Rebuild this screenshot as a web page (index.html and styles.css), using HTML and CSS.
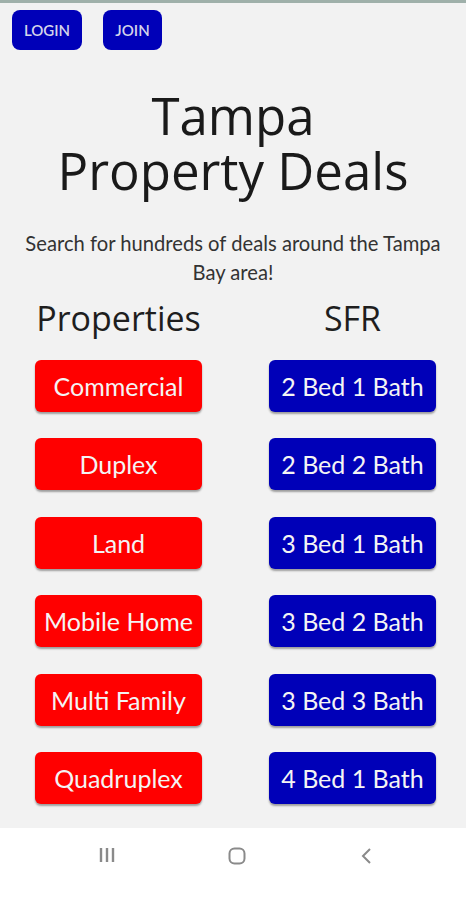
FILE: index.html
```html
<!DOCTYPE html>
<html lang="en">
<head>
  <meta charset="UTF-8">
  <meta name="viewport" content="width=device-width, initial-scale=1.0">
  <title>Tampa Property Deals</title>
  <link rel="stylesheet" href="styles.css">
</head>
<body>
  <div class="app">
    <div class="top-bar">
      <button class="auth-btn login">LOGIN</button>
      <button class="auth-btn join">JOIN</button>
    </div>

    <h1 class="title">Tampa<br>Property Deals</h1>
    <p class="subtitle">Search for hundreds of deals around the Tampa Bay area!</p>

    <div class="columns">
      <div class="column">
        <h2>Properties</h2>
        <button class="deal-btn red">Commercial</button>
        <button class="deal-btn red">Duplex</button>
        <button class="deal-btn red">Land</button>
        <button class="deal-btn red">Mobile Home</button>
        <button class="deal-btn red">Multi Family</button>
        <button class="deal-btn red">Quadruplex</button>
      </div>
      <div class="column">
        <h2>SFR</h2>
        <button class="deal-btn blue">2 Bed 1 Bath</button>
        <button class="deal-btn blue">2 Bed 2 Bath</button>
        <button class="deal-btn blue">3 Bed 1 Bath</button>
        <button class="deal-btn blue">3 Bed 2 Bath</button>
        <button class="deal-btn blue">3 Bed 3 Bath</button>
        <button class="deal-btn blue">4 Bed 1 Bath</button>
      </div>
    </div>
  </div>

  <!-- Android nav bar -->
  <div class="nav-bar">
    <svg width="20" height="18" viewBox="0 0 20 18"><path d="M4 2v14M10 2v14M16 2v14" stroke="#8a8a8a" stroke-width="2.4" fill="none"/></svg>
    <svg width="20" height="20" viewBox="0 0 20 20"><rect x="2.5" y="2.5" width="15" height="15" rx="5" stroke="#8a8a8a" stroke-width="2" fill="none"/></svg>
    <svg width="20" height="20" viewBox="0 0 20 20"><path d="M13 3L6 10l7 7" stroke="#8a8a8a" stroke-width="2" fill="none"/></svg>
  </div>
</body>
</html>
```

FILE: styles.css
```css
body {
  margin: 0;
  background-color: #f2f2f2;
  font-family: Lato, "Open Sans", sans-serif;
}
.app {
  height: 828px;
  border-top: 3px solid #9fb0aa;
  box-sizing: border-box;
  overflow: hidden;
}
.top-bar {
  display: flex;
  gap: 21px;
  padding: 7px 12px 0;
}
.auth-btn {
  height: 40px;
  border: none;
  border-radius: 8px;
  background-color: #0000b8;
  color: #d4d4ea;
  font-family: Lato, sans-serif;
  font-size: 15px;
  font-weight: 600;
  padding: 0;
}
.login {
  width: 70px;
}
.join {
  width: 59px;
}
.title {
  margin: 38px 0 0;
  text-align: center;
  font-family: "Open Sans", sans-serif;
  font-weight: 500;
  font-size: 51px;
  line-height: 55px;
  color: #1a1a1a;
}
.subtitle {
  margin: 31px 10px 0;
  text-align: center;
  font-size: 20.2px;
  line-height: 29px;
  color: #333;
}
.columns {
  display: grid;
  grid-template-columns: 1fr 1fr;
  margin-top: 9px;
}
.column {
  display: flex;
  flex-direction: column;
  align-items: center;
}
.column:first-child {
  padding-left: 4px;
}
.column:last-child {
  padding-left: 6px;
}
.column h2 {
  margin: 0 0 20px;
  font-family: "Open Sans", sans-serif;
  font-weight: normal;
  font-size: 34px;
  line-height: 44px;
  color: #1e1e1e;
}
.deal-btn {
  width: 167px;
  height: 52px;
  margin-bottom: 26.4px;
  border: none;
  border-radius: 6px;
  color: #f4f4f4;
  font-family: Lato, sans-serif;
  font-size: 25px;
  padding: 0;
  box-shadow: 0 2px 2px rgba(0, 0, 0, 0.35);
}
.red {
  background-color: #ff0000;
}
.blue {
  background-color: #0000b8;
}
.nav-bar {
  height: 72px;
  background-color: #fff;
  display: grid;
  grid-template-columns: 1fr 1fr 1fr;
  align-items: start;
  justify-items: center;
  padding: 18px 34px 0 42px;
  box-sizing: border-box;
}
```
